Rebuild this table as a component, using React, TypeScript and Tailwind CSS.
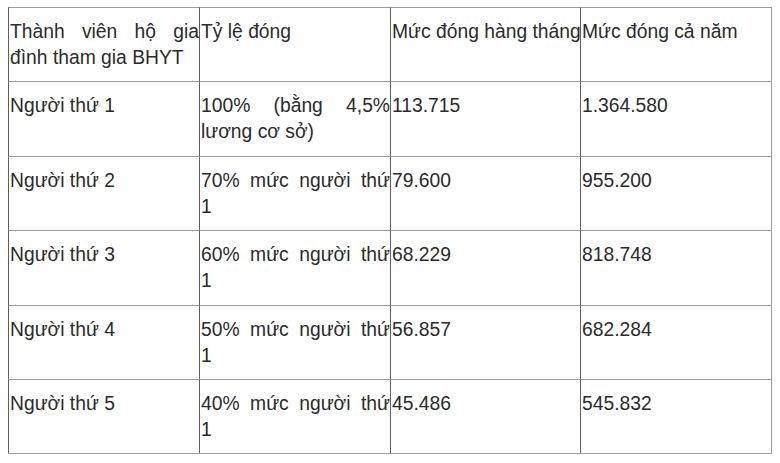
import React from "react";

const rows: string[][][] = [
  [["Thành viên hộ gia", "đình tham gia BHYT"], ["Tỷ lệ đóng"], ["Mức đóng hàng tháng"], ["Mức đóng cả năm"]],
  [["Người thứ 1"], ["100% (bằng 4,5%", "lương cơ sở)"], ["113.715"], ["1.364.580"]],
  [["Người thứ 2"], ["70% mức người thứ", "1"], ["79.600"], ["955.200"]],
  [["Người thứ 3"], ["60% mức người thứ", "1"], ["68.229"], ["818.748"]],
  [["Người thứ 4"], ["50% mức người thứ", "1"], ["56.857"], ["682.284"]],
  [["Người thứ 5"], ["40% mức người thứ", "1"], ["45.486"], ["545.832"]],
];

function CellView({ lines }: { lines: string[] }) {
  return (
    <div className="border-l border-t border-l-[#5e5e5e] border-t-[#9a9a9a] pl-px pt-[11px] overflow-visible">
      {lines.map((l, i) =>
        lines.length > 1 && i < lines.length - 1 ? (
          <div key={i} className="whitespace-nowrap text-justify [text-align-last:justify]">
            {l}
          </div>
        ) : (
          <div key={i} className="whitespace-nowrap">
            {l}
          </div>
        )
      )}
    </div>
  );
}

export default function App() {
  return (
    <div
      className="w-[780px] h-[463px] bg-white pl-2 pt-[7px] text-[#2b2b2b] text-[19.3px] leading-[26px]"
      style={{ fontFamily: '"Liberation Sans", Arial, sans-serif' }}
    >
      <div className="w-[764px] grid grid-cols-[191px_191px_190px_191px] grid-rows-[74px_75px_74px_75px_74px_74px] border-r border-b border-r-[#9a9a9a] border-b-[#a0a0a0]">
        {rows.map((r, ri) =>
          r.map((c, ci) => <CellView key={`${ri}-${ci}`} lines={c} />)
        )}
      </div>
    </div>
  );
}
